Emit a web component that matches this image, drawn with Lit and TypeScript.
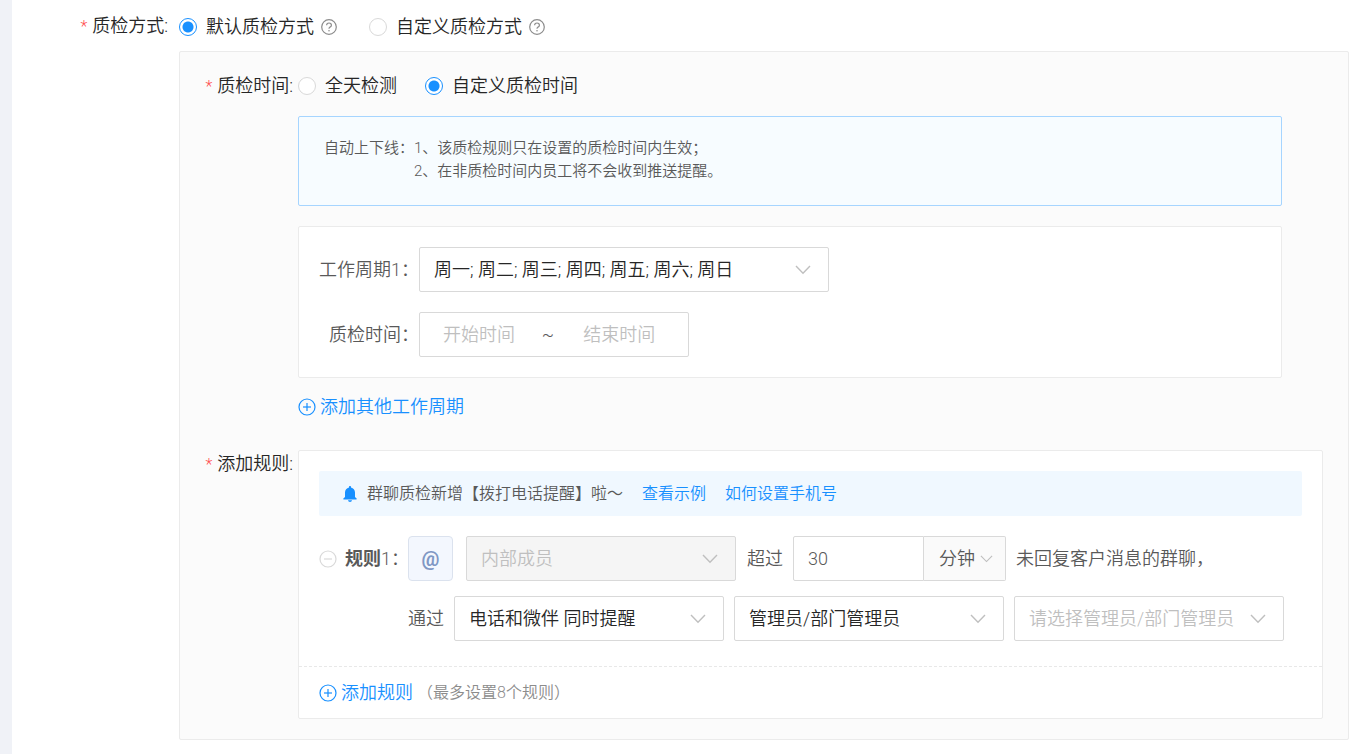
import { LitElement, html, css, svg, nothing } from "lit";
import { customElement, property } from "lit/decorators.js";

const sharedStyles = css`
  * {
    box-sizing: border-box;
  }
  input,
  select,
  button {
    margin: 0;
    font: inherit;
    color: inherit;
  }
`;

const questionIcon = html`<svg class="help" viewBox="0 0 16 16" role="img" aria-label="说明">
  <circle cx="8" cy="8" r="7.3" fill="none" stroke="currentColor" stroke-width="1.2" />
  <path d="M5.6 6.300C5.600 4.900 6.600 4 8 4s2.400.9 2.400 2.200c0 1-.6 1.500-1.400 1.900-.7.4-1 .8-1 1.600" fill="none" stroke="currentColor" stroke-width="1.200" />
  <circle cx="8" cy="11.700" r=".8" fill="currentColor" />
</svg>`;

const circleIcon = (plus: boolean) => html`<svg class="circle-icon" viewBox="0 0 18 18" aria-hidden="true">
  <circle cx="9" cy="9" r="8" fill="none" stroke="currentColor" stroke-width="1.2" />
  <path d="M5 9h8" fill="none" stroke="currentColor" stroke-width="1.2" />
  ${plus ? svg`<path d="M9 5v8" fill="none" stroke="currentColor" stroke-width="1.2" />` : nothing}
</svg>`;

@customElement("choice-select")
export class ChoiceSelect extends LitElement {
  @property({ type: Array }) options: string[] = [];
  @property() name = "";
  @property({ type: Boolean }) disabled = false;
  @property({ type: Boolean }) empty = false;
  @property({ type: Boolean }) addon = false;

  static styles = [
    sharedStyles,
    css`
      :host {
        display: block;
        width: 270px;
        max-width: 100%;
      }
      .wrap {
        display: grid;
        align-items: center;
      }
      select,
      .arrow {
        grid-area: 1 / 1;
      }
      select {
        appearance: none;
        width: 100%;
        height: 45px;
        padding: 0 40px 0 14px;
        border: 1px solid #d9d9d9;
        border-radius: 2px;
        background: #fff;
        color: #262626;
        outline: none;
      }
      .arrow {
        justify-self: end;
        width: 16px;
        height: 10px;
        margin-right: 18px;
        color: #bfbfbf;
        pointer-events: none;
      }
      .empty select {
        color: #bfbfbf;
      }
      select:disabled {
        background: #f5f5f5;
        color: #bfbfbf;
        opacity: 1;
      }
      .addon select {
        padding: 0 26px 0 15px;
        border-left: 0;
        border-radius: 0 2px 2px 0;
        background: #fafafa;
        color: #595959;
      }
      .addon .arrow {
        width: 13px;
        height: 8px;
        margin-right: 13px;
      }
    `,
  ];

  render() {
    return html`<div class="wrap ${this.empty ? "empty" : ""} ${this.addon ? "addon" : ""}">
      <select aria-label=${this.name} ?disabled=${this.disabled}>
        ${this.options.map((o) => html`<option>${o}</option>`)}
      </select>
      <svg class="arrow" viewBox="0 0 16 10" aria-hidden="true">
        <path d="M1 1l7 7.2L15 1" fill="none" stroke="currentColor" stroke-width="1.4" />
      </svg>
    </div>`;
  }
}

@customElement("app-root")
export class AppRoot extends LitElement {
  static styles = [
    sharedStyles,
    css`
      :host {
        display: block;
        min-height: 100vh;
        border-left: 12px solid #f0f2f7;
        background: #fff;
        font-family: Roboto, "Noto Sans CJK SC", sans-serif;
        font-size: 18px;
        font-weight: 350;
        line-height: 28px;
        color: #262626;
      }
      .page {
        display: grid;
        grid-template-columns: 167px minmax(0, 1fr);
        padding: 12px 16px 14px 0;
      }
      .label {
        padding-right: 5px;
        text-align: right;
      }
      .page > .label {
        padding-right: 11px;
      }
      .star {
        margin-right: 5px;
        font-size: 16px;
        color: #ff4d4f;
      }
      .radios {
        display: flex;
        flex-wrap: wrap;
        gap: 28px;
      }
      .page > .radios {
        gap: 32px;
      }
      .choice {
        display: flex;
        align-items: center;
      }
      .choice label {
        display: flex;
        align-items: center;
        gap: 9px;
      }
      input[type="radio"] {
        appearance: none;
        width: 18px;
        height: 18px;
        border: 1px solid #d9d9d9;
        border-radius: 50%;
        background: #fff;
      }
      input[type="radio"]:checked {
        border-color: #1890ff;
        background: radial-gradient(circle, #1890ff 5px, #fff 6px);
      }
      .help {
        width: 16px;
        height: 16px;
        margin-left: 7px;
        color: #8c8c8c;
      }
      .panel {
        grid-column: 2;
        display: grid;
        grid-template-columns: 118px minmax(0, 1fr);
        row-gap: 30px;
        margin-top: 11px;
        padding: 20px 25px 20px 0;
        border: 1px solid #ebebeb;
        border-radius: 2px;
        background: #fbfbfb;
      }
      .page > .panel {
        margin-top: 10px;
      }
      .notice {
        display: flex;
        width: 96%;
        margin-top: 16px;
        padding: 20px 25px 22px;
        border: 1px solid #a6d5ff;
        border-radius: 2px;
        background: #f7fcff;
        font-size: 15px;
        line-height: 23px;
        color: #595959;
      }
      .cycle {
        display: grid;
        grid-template-columns: 120px minmax(0, 1fr);
        row-gap: 20px;
        align-items: center;
        width: 96%;
        margin: 20px 0 16px;
        padding: 20px 20px 20px 0;
        border: 1px solid #ebebeb;
        border-radius: 2px;
        background: #fff;
      }
      .cycle-label {
        text-align: right;
        color: #595959;
      }
      .weekdays {
        width: 410px;
      }
      .range {
        display: flex;
        align-items: center;
        width: 270px;
        height: 45px;
        padding: 0 10px 0 23px;
        border: 1px solid #d9d9d9;
        border-radius: 2px;
      }
      .range input {
        flex: 1;
        min-width: 0;
        padding: 0;
        border: 0;
        background: none;
        outline: none;
      }
      .range span {
        margin: 0 29px 0 4px;
        color: #595959;
      }
      ::placeholder {
        color: #bfbfbf;
        opacity: 1;
      }
      .add {
        display: flex;
        align-items: center;
        gap: 4px;
        padding: 0;
        border: 0;
        background: none;
        line-height: 26px;
        color: #1890ff;
      }
      .circle-icon {
        flex: none;
        width: 18px;
        height: 18px;
      }
      .rules {
        border: 1px solid #ebebeb;
        border-radius: 2px;
        background: #fff;
        color: #595959;
      }
      .rules-body {
        padding: 20px 20px 25px;
        border-bottom: 1px dashed #e8e8e8;
      }
      .banner {
        display: flex;
        align-items: center;
        gap: 19px;
        min-height: 45px;
        padding: 0 24px;
        border-radius: 2px;
        background: #f0f8ff;
        font-size: 16px;
      }
      .banner a {
        color: #1890ff;
        text-decoration: none;
      }
      .banner-text {
        display: flex;
        align-items: center;
        gap: 10px;
      }
      .bell {
        width: 14px;
        height: 16px;
        color: #1890ff;
      }
      .line {
        display: flex;
        flex-wrap: wrap;
        align-items: center;
        gap: 10px;
      }
      .first {
        margin: 20px 0 15px;
      }
      .second {
        padding-left: 89px;
      }
      .rule-name {
        display: flex;
        align-items: center;
        width: 79px;
        white-space: nowrap;
      }
      .rule-name b {
        font-weight: 700;
      }
      .remove {
        display: flex;
        margin-right: 8px;
        padding: 0;
        border: 0;
        background: none;
        color: #d9d9d9;
      }
      .at {
        width: 45px;
        height: 45px;
        margin-right: 3px;
        padding: 0;
        border: 1px solid #dbe2ee;
        border-radius: 4px;
        background: #f3f7fe;
        font-size: 20px;
        font-weight: 700;
        color: #7f97c4;
      }
      .over {
        padding-left: 1px;
      }
      .duration {
        display: flex;
      }
      .duration input {
        width: 131px;
        height: 45px;
        padding: 0 14px;
        border: 1px solid #d9d9d9;
        border-radius: 2px 0 0 2px;
        outline: none;
      }
      .unit {
        width: 82px;
      }
      .rules-foot {
        display: flex;
        align-items: center;
        gap: 4px;
        min-height: 51px;
        padding: 0 20px;
      }
      .limit {
        font-size: 16px;
        color: #8c8c8c;
      }
    `,
  ];

  private radio(group: string, text: string, checked: boolean, help: boolean) {
    return html`<div class="choice">
      <label><input type="radio" name=${group} .checked=${checked} />${text}</label>
      ${help ? questionIcon : nothing}
    </div>`;
  }

  private label(text: string) {
    return html`<div class="label"><span class="star">*</span>${text}:</div>`;
  }

  render() {
    return html`
      <form class="page">
        ${this.label("质检方式")}
        <div class="radios">
          ${this.radio("mode", "默认质检方式", true, true)}
          ${this.radio("mode", "自定义质检方式", false, true)}
        </div>
        <section class="panel">
          ${this.label("质检时间")}
          <div>
            <div class="radios">
              ${this.radio("time", "全天检测", false, false)}
              ${this.radio("time", "自定义质检时间", true, false)}
            </div>
            <div class="notice">
              <div>自动上下线：</div>
              <div>
                <div>1、该质检规则只在设置的质检时间内生效；</div>
                <div>2、在非质检时间内员工将不会收到推送提醒。</div>
              </div>
            </div>
            <div class="cycle">
              <div class="cycle-label">工作周期1：</div>
              <choice-select
                class="weekdays"
                name="工作周期1"
                .options=${["周一; 周二; 周三; 周四; 周五; 周六; 周日"]}
              ></choice-select>
              <label class="cycle-label" for="start">质检时间：</label>
              <div class="range">
                <input id="start" placeholder="开始时间" />
                <span>~</span>
                <input placeholder="结束时间" aria-label="结束时间" />
              </div>
            </div>
            <button type="button" class="add">${circleIcon(true)}添加其他工作周期</button>
          </div>
          ${this.label("添加规则")}
          <div class="rules">
            <div class="rules-body">
              <div class="banner">
                <div class="banner-text">
                  <svg class="bell" viewBox="0 0 14 16" aria-hidden="true">
                    <path d="M7 0c.6 0 1 .4 1 1v.6c2.300.500 4 2.500 4 4.900v4.500l1.600 1.500c.3.3.2.900-.3.900H.7c-.5 0-.6-.6-.3-.9L2 11V6.500c0-2.400 1.700-4.400 4-4.900V1c0-.6.4-1 1-1z" fill="currentColor" />
                    <path d="M5 14.200h4c-.2 1-1 1.700-2 1.700s-1.800-.7-2-1.700z" fill="currentColor" />
                  </svg>
                  <span>群聊质检新增【拨打电话提醒】啦～</span>
                </div>
                <a href="#example">查看示例</a>
                <a href="#phone">如何设置手机号</a>
              </div>
              <div class="line first">
                <div class="rule-name">
                  <button type="button" class="remove" aria-label="删除规则1">${circleIcon(false)}</button>
                  <b>规则</b>1：
                </div>
                <button type="button" class="at">@</button>
                <choice-select name="成员" disabled .options=${["内部成员"]}></choice-select>
                <label class="over" for="minutes">超过</label>
                <div class="duration">
                  <input id="minutes" value="30" />
                  <choice-select class="unit" name="单位" addon .options=${["分钟"]}></choice-select>
                </div>
                <span>未回复客户消息的群聊，</span>
              </div>
              <div class="line second">
                <span>通过</span>
                <choice-select name="提醒方式" .options=${["电话和微伴 同时提醒"]}></choice-select>
                <choice-select name="提醒对象" .options=${["管理员/部门管理员"]}></choice-select>
                <choice-select name="选择管理员" empty .options=${["请选择管理员/部门管理员"]}></choice-select>
              </div>
            </div>
            <div class="rules-foot">
              <button type="button" class="add">${circleIcon(true)}添加规则</button>
              <span class="limit">（最多设置8个规则）</span>
            </div>
          </div>
        </section>
      </form>
    `;
  }
}
